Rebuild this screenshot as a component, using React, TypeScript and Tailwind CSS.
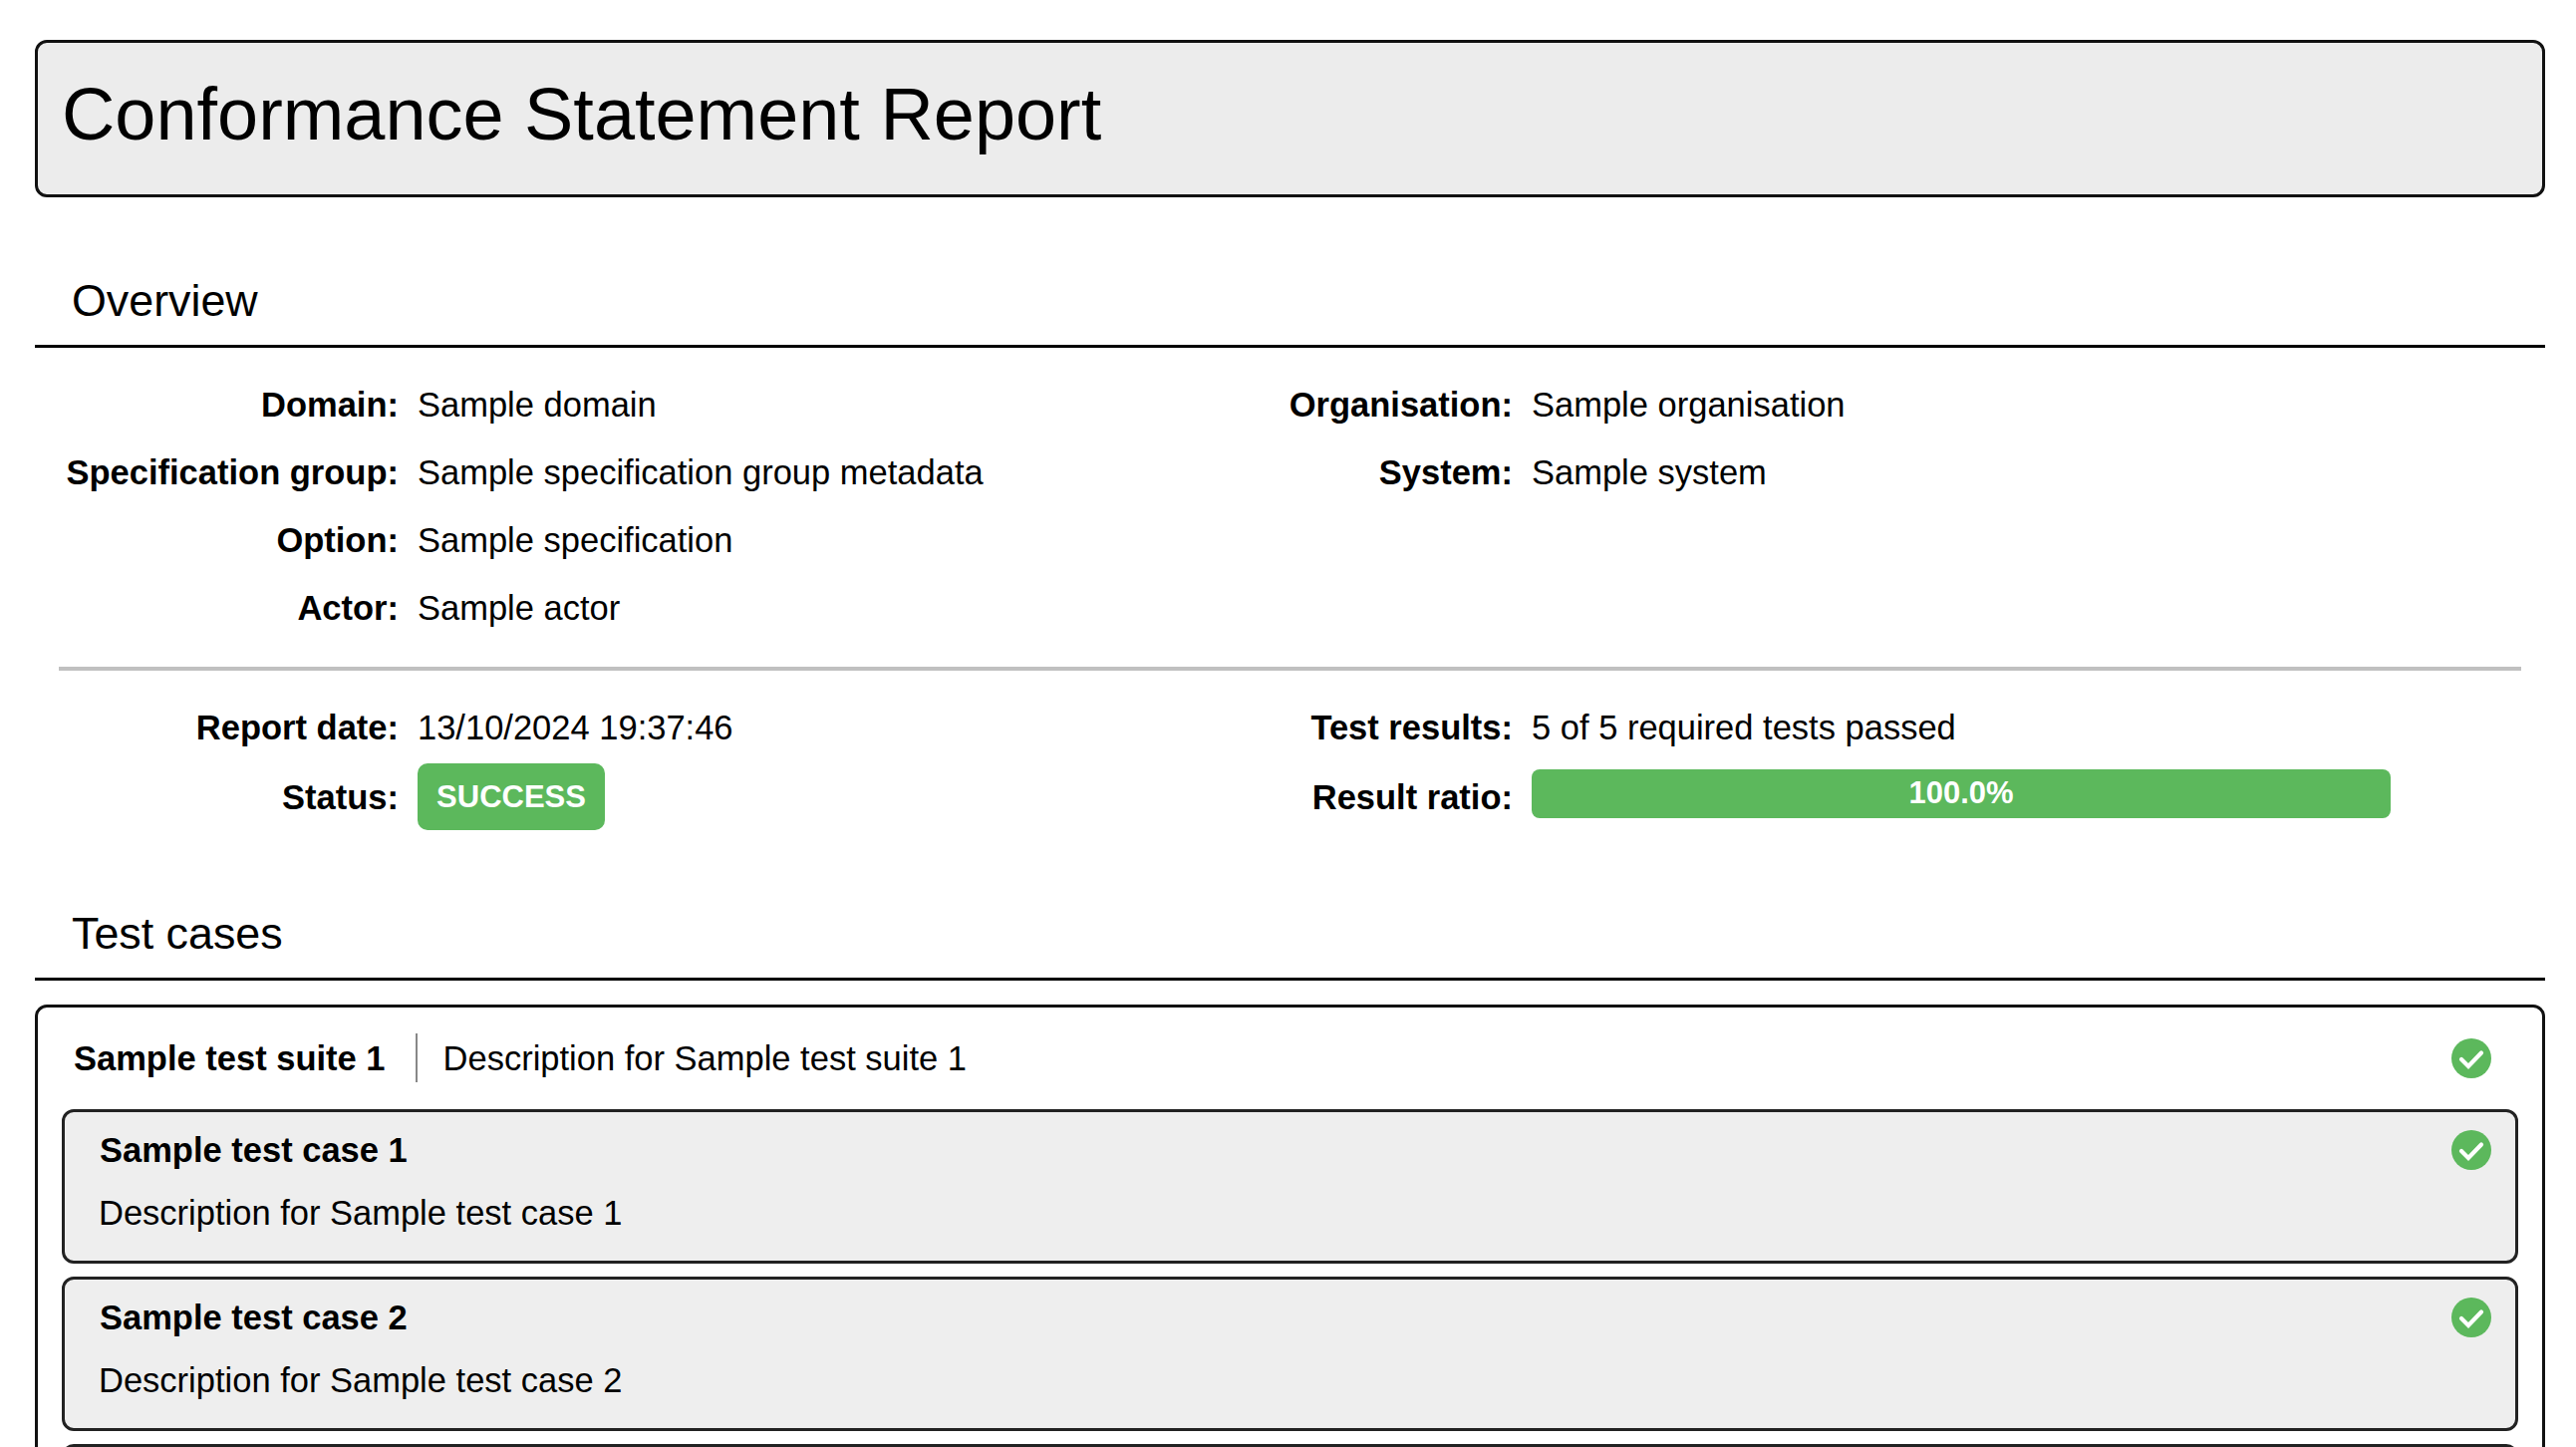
const Check = () => (
  <svg viewBox="0 0 40 40" className="h-10 w-10 shrink-0">
    <circle cx="20" cy="20" r="20" fill="#5cb85c" />
    <path d="M10 21 L17 28 L30 14.5" fill="none" stroke="#fff" strokeWidth="4.2" strokeLinecap="round" strokeLinejoin="miter" />
  </svg>
);

const Field = ({ label, children }: { label: string; children: React.ReactNode }) => (
  <>
    <div className="text-right font-bold whitespace-nowrap">{label}</div>
    <div>{children}</div>
  </>
);

const Section = ({ title }: { title: string }) => (
  <h2 className="border-b-[3px] border-black pb-[19px] pl-[37px] text-[44.8px] leading-[52px] font-normal">{title}</h2>
);

const TestCase = ({ n }: { n: number }) => (
  <div className="mb-[13px] h-[155px] rounded-[12px] border-[3px] border-[#222] bg-[#eee] pt-[15px] pr-[24px] pl-[34px]">
    <div className="flex items-center justify-between">
      <div className="ml-[1px] font-bold">Sample test case {n}</div>
      <Check />
    </div>
    <div className="mt-[17px]">Description for Sample test case {n}</div>
  </div>
);

export default function App() {
  return (
    <div className="h-[1452px] overflow-hidden bg-white pt-[40px] pr-[31px] pl-[35px] font-['Liberation_Sans',Arial,sans-serif] text-[34.5px] leading-[46px] text-black">
      <div className="flex h-[158px] items-center rounded-[12px] border-[3px] border-[#111] bg-[#ececec] pb-[9px] pl-[24px] text-[73.9px]">
        Conformance Statement Report
      </div>

      <div className="mt-[77px]">
        <Section title="Overview" />
      </div>
      <div className="pt-[34px] pr-[24px] pl-[24px]">
        <div className="grid grid-cols-[341px_740px_340px_1fr] gap-x-[19px] gap-y-[22px]">
          <Field label="Domain:">Sample domain</Field>
          <Field label="Organisation:">Sample organisation</Field>
          <Field label="Specification group:">Sample specification group metadata</Field>
          <Field label="System:">Sample system</Field>
          <Field label="Option:">Sample specification</Field>
          <div />
          <div />
          <Field label="Actor:">Sample actor</Field>
          <div />
          <div />
        </div>
        <hr className="mt-[36px] mb-[34px] border-t-[4px] border-[#c0c0c0]" />
        <div className="grid grid-cols-[341px_740px_340px_1fr] items-center gap-x-[19px] gap-y-[13px]">
          <Field label="Report date:">13/10/2024 19:37:46</Field>
          <Field label="Test results:">5 of 5 required tests passed</Field>
          <Field label="Status:">
            <span className="inline-flex h-[67px] w-[188px] items-center justify-center rounded-[10px] bg-[#5cb85c] text-[31px] font-bold text-white">SUCCESS</span>
          </Field>
          <Field label="Result ratio:">
            <div className="mb-[7px] flex h-[49px] w-[862px] items-center justify-center rounded-[8px] bg-[#5cb85c] text-[31px] font-bold text-white">100.0%</div>
          </Field>
        </div>
      </div>

      <div className="mt-[77px]">
        <Section title="Test cases" />
      </div>
      <div className="mt-[24px] rounded-[12px] border-[3px] border-[#111] pt-[26px] pr-[24px] pl-[24px]">
        <div className="mb-[27px] flex items-center pr-[27px]">
          <div className="border-r-2 border-[#888] py-[1.5px] pr-[30px] pl-[12px] font-bold">Sample test suite 1</div>
          <div className="flex-1 pl-[26px]">Description for Sample test suite 1</div>
          <Check />
        </div>
        <TestCase n={1} />
        <TestCase n={2} />
        <div className="h-[155px] rounded-[12px] border-[3px] border-[#222] bg-[#eee]" />
      </div>
    </div>
  );
}
